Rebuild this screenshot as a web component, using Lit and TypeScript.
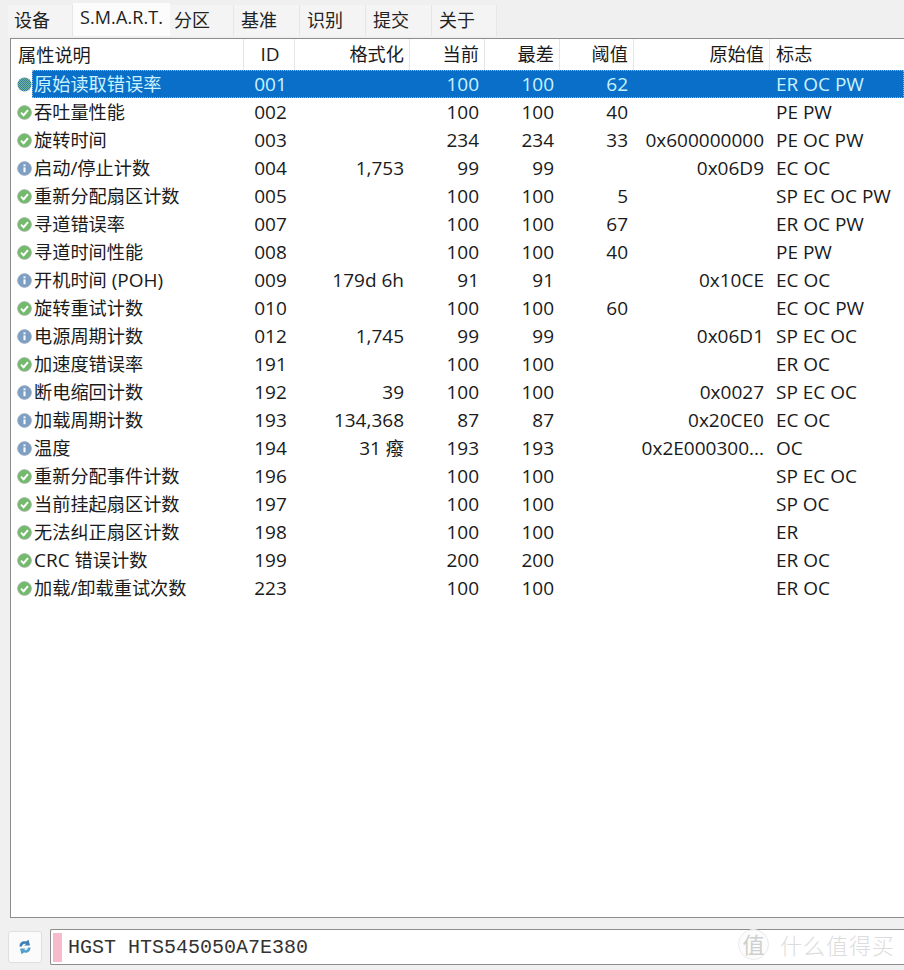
import { LitElement, html, css, svg } from "lit";
import { customElement } from "lit/decorators.js";

type Row = [string, string, string, string, string, string, string, string, string];
const rows: Row[] = [
  ["g", "原始读取错误率", "001", "", "100", "100", "62", "", "ER OC PW"],
  ["g", "吞吐量性能", "002", "", "100", "100", "40", "", "PE PW"],
  ["g", "旋转时间", "003", "", "234", "234", "33", "0x600000000", "PE OC PW"],
  ["i", "启动/停止计数", "004", "1,753", "99", "99", "", "0x06D9", "EC OC"],
  ["g", "重新分配扇区计数", "005", "", "100", "100", "5", "", "SP EC OC PW"],
  ["g", "寻道错误率", "007", "", "100", "100", "67", "", "ER OC PW"],
  ["g", "寻道时间性能", "008", "", "100", "100", "40", "", "PE PW"],
  ["i", "开机时间 (POH)", "009", "179d 6h", "91", "91", "", "0x10CE", "EC OC"],
  ["g", "旋转重试计数", "010", "", "100", "100", "60", "", "EC OC PW"],
  ["i", "电源周期计数", "012", "1,745", "99", "99", "", "0x06D1", "SP EC OC"],
  ["g", "加速度错误率", "191", "", "100", "100", "", "", "ER OC"],
  ["i", "断电缩回计数", "192", "39", "100", "100", "", "0x0027", "SP EC OC"],
  ["i", "加载周期计数", "193", "134,368", "87", "87", "", "0x20CE0", "EC OC"],
  ["i", "温度", "194", "31 癈", "193", "193", "", "0x2E000300...", "OC"],
  ["g", "重新分配事件计数", "196", "", "100", "100", "", "", "SP EC OC"],
  ["g", "当前挂起扇区计数", "197", "", "100", "100", "", "", "SP OC"],
  ["g", "无法纠正扇区计数", "198", "", "100", "100", "", "", "ER"],
  ["g", "CRC 错误计数", "199", "", "200", "200", "", "", "ER OC"],
  ["g", "加载/卸载重试次数", "223", "", "100", "100", "", "", "ER OC"],
];

const headers = ["属性说明", "ID", "格式化", "当前", "最差", "阈值", "原始值", "标志"];
const tabs = ["设备", "S.M.A.R.T.", "分区", "基准", "识别", "提交", "关于"];

const mixed = (text: string) =>
  text
    .split(/([\u3000-\u9fff]+)/)
    .map((part, i) => (i % 2 ? html`<span class="cjk">${part}</span>` : part));

const statusIcon = (kind: string, selected: boolean) => {
  if (kind === "g") {
    return html`<svg class="icon" viewBox="0 0 15 15" aria-hidden="true">
      ${selected
        ? svg`<defs><pattern id="dither" width="2" height="2" patternUnits="userSpaceOnUse">
            <rect width="2" height="2" fill="#6fb59a"></rect>
            <rect width="1" height="1" fill="#3a7f9e"></rect>
            <rect x="1" y="1" width="1" height="1" fill="#3a7f9e"></rect>
          </pattern></defs>
          <circle cx="7.5" cy="7.5" r="7" fill="url(#dither)"></circle>`
        : svg`<circle cx="7.5" cy="7.5" r="6.8" fill="#74ba6c" stroke="#93b490" stroke-width="1"></circle>
          <path d="M4 7.6 6.6 10.2 11 5.2" fill="none" stroke="#fff" stroke-width="2"></path>`}
    </svg>`;
  }
  return html`<svg class="icon" viewBox="0 0 15 15" aria-hidden="true">
    <circle cx="7.5" cy="7.5" r="6.8" fill="#7c9fc6" stroke="#94a5bb" stroke-width="1"></circle>
    <rect x="6.5" y="6.4" width="2" height="4.8" fill="#fff"></rect>
    <rect x="6.5" y="3.4" width="2" height="1.9" fill="#fff"></rect>
  </svg>`;
};

@customElement("app-root")
export class AppRoot extends LitElement {
  static styles = css`
    :host {
      display: flex;
      flex-direction: column;
      width: 904px;
      height: 970px;
      overflow: hidden;
      position: relative;
      background: #f0f0f0;
      color: #1a1a1a;
      font-family: "Open Sans", "Noto Sans CJK SC", sans-serif;
      font-size: 19px;
    }
    .cjk {
      font-family: "Noto Sans CJK SC", sans-serif;
      font-size: 18.2px;
      line-height: 1;
    }
    .tabs {
      display: flex;
      height: 38px;
      padding: 0 0 2px 8px;
      box-sizing: border-box;
      align-items: flex-end;
      flex: none;
    }
    .tab {
      height: 31px;
      width: 66px;
      box-sizing: border-box;
      display: flex;
      align-items: center;
      padding: 0 0 3px 7px;
      font-family: "Noto Sans CJK SC", sans-serif;
      font-size: 18px;
      color: #222;
      background: #f4f4f4;
      border-right: 1px solid #e6e6e6;
    }
    .tab.first { width: 65px; padding-left: 6px; }
    .tab.active {
      width: 97px;
      height: 33px;
      padding: 0 0 5px 7px;
      background: #fcfcfc;
      border: 0;
      font-family: "Open Sans", sans-serif;
      font-size: 18px;
      letter-spacing: 0.1px;
    }
    .tab.after { width: 64px; padding-left: 4px; }
    .tab.last { width: 65px; }
    .panel {
      flex: none;
      height: 880px;
      margin-left: 10px;
      background: #fff;
      border: 1px solid #8c8c8c;
      border-right: 0;
      box-sizing: border-box;
      overflow: hidden;
    }
    .row {
      display: grid;
      grid-template-columns: 233px 51px 115px 75px 75px 74px 136px 1fr;
      height: 28px;
      align-items: center;
      line-height: 28px;
      white-space: nowrap;
      position: relative;
    }
    .head {
      height: 31px;
      line-height: 31px;
    }
    .head .c {
      height: 31px;
      padding-right: 5px;
      border-right: 1px solid #e6e6e6;
      box-sizing: border-box;
    }
    .c { padding: 0 6px 0 0; box-sizing: border-box; text-align: right; overflow: hidden; position: relative; }
    .c.id { text-align: center; padding: 0 0 0 2px; }
    .head .c.id { padding: 0 0 0 2px; }
    .c.flag { text-align: left; padding: 0 0 0 6px; }
    .head .c.flag { border-right: 0; padding: 0 0 0 6px; }
    .c.name { text-align: left; padding: 0; display: flex; align-items: center; }
    .head .c.name { padding-left: 7px; }
    .icon { width: 15px; height: 15px; margin: 0 2px 0 6px; flex: none; }
    .name-text { flex: 1; height: 28px; }
    .sel { color: #c9f2ff; }
    .sel::before {
      content: "";
      position: absolute;
      inset: 0 0 0 21px;
      background: #0a6fc8;
      border: 1px dotted #9fb7cc;
      box-sizing: border-box;
    }
    .footer {
      flex: none;
      display: flex;
      align-items: stretch;
      gap: 8px;
      margin-top: 11px;
      padding-left: 8px;
      height: 36px;
    }
    .refresh {
      width: 34px;
      margin: 2px 0;
      box-sizing: border-box;
      background: #fbfbfb;
      border: 1px solid #dfdfdf;
      border-radius: 3px;
      display: flex;
      align-items: center;
      justify-content: center;
    }
    .drive {
      flex: 1;
      background: #fff;
      border: 1px solid #8c8c8c;
      border-right: 0;
      border-radius: 2px 0 0 2px;
      display: flex;
      align-items: center;
      gap: 6px;
      padding-left: 2px;
    }
    .pink { width: 9px; height: 29px; background: #f7bccb; }
    .drive-name {
      font-family: "Liberation Mono", monospace;
      font-size: 20px;
      color: #333;
    }
    .mark {
      position: absolute;
      left: 738px;
      top: 926px;
      height: 36px;
      display: flex;
      align-items: center;
      gap: 11px;
      white-space: nowrap;
      color: #dcdcdc;
      font-family: "Noto Sans CJK SC", sans-serif;
    }
    .seal {
      width: 29px;
      height: 29px;
      border: 1px solid #ebebeb;
      border-radius: 50%;
      font-size: 22px;
      line-height: 27px;
      text-align: center;
      color: #cfcfcf;
      background: #fcfcfc;
    }
    .mark-text { font-size: 22px; letter-spacing: 1px; line-height: 34px; font-weight: 300; }
  `;

  render() {
    return html`
      <div class="tabs">
        ${tabs.map(
          (t, i) =>
            html`<div class="tab ${i === 0 ? "first" : ""} ${i === 1 ? "active" : ""} ${i === 2 ? "after" : ""} ${i === 6 ? "last" : ""}">${t}</div>`
        )}
      </div>
      <div class="panel">
        <div class="row head">
          ${headers.map((h, i) => {
            const cls = i === 0 ? "name" : i === 1 ? "id" : i === 7 ? "flag" : "";
            return html`<div class="c ${cls}">${mixed(h)}</div>`;
          })}
        </div>
        ${rows.map((r, idx) => {
          const [kind, name, id, fmt, cur, worst, thr, raw, flag] = r;
          return html`<div class="row ${idx === 0 ? "sel" : ""}">
            <div class="c name">${statusIcon(kind, idx === 0)}<span class="name-text">${mixed(name)}</span></div>
            <div class="c id">${id}</div>
            <div class="c">${mixed(fmt)}</div>
            <div class="c">${cur}</div>
            <div class="c">${worst}</div>
            <div class="c">${thr}</div>
            <div class="c">${raw}</div>
            <div class="c flag">${flag}</div>
          </div>`;
        })}
      </div>
      <div class="footer">
        <div class="refresh">
          <svg width="14" height="16" viewBox="0 0 14 16" aria-hidden="true">
            <path d="M1.5 7.5 C1.5 3.5 4.5 1.8 8 2.4 L10.5 .8 L12 6.5 H6 L8 5 C5.8 4.5 4.2 5.5 4 7.5 Z" fill="#3f7fb4"></path>
            <path d="M12.5 8.5 C12.5 12.5 9.5 14.2 6 13.6 L3.5 15.2 L2 9.5 H8 L6 11 C8.2 11.5 9.8 10.5 10 8.5 Z" fill="#55a0ca"></path>
          </svg>
        </div>
        <div class="drive">
          <div class="pink"></div>
          <div class="drive-name">HGST HTS545050A7E380</div>
        </div>
      </div>
      <div class="mark">
        <div class="seal">值</div>
        <div class="mark-text">什么值得买</div>
      </div>
    `;
  }
}
